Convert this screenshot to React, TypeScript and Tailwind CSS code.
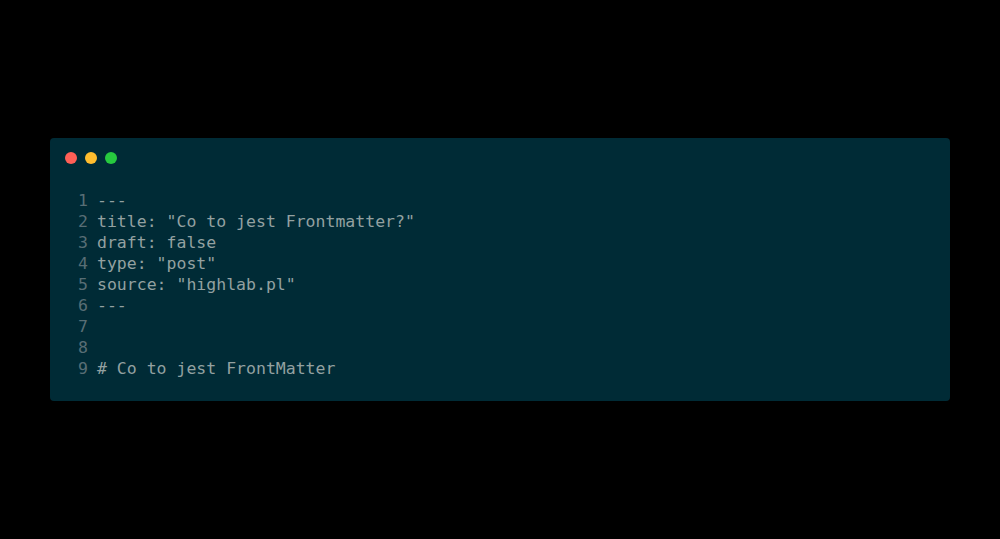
const lines = [
  "---",
  'title: "Co to jest Frontmatter?"',
  "draft: false",
  'type: "post"',
  'source: "highlab.pl"',
  "---",
  "",
  "",
  "# Co to jest FrontMatter",
];

export default function App() {
  return (
    <div className="w-[1000px] h-[539px] bg-black flex flex-col items-center pt-[138px]">
      <div className="w-[900px] h-[263px] bg-[#002b36] rounded-[4px] flex flex-col">
        <div className="flex items-center gap-2 pl-[15px] pt-[14px]">
          <span className="w-3 h-3 rounded-full bg-[#ff5f56]" />
          <span className="w-3 h-3 rounded-full bg-[#ffbd2e]" />
          <span className="w-3 h-3 rounded-full bg-[#27c93f]" />
        </div>
        <pre className="mt-[26px] pl-[28px] font-['DejaVu_Sans_Mono',monospace] text-[16.5px] leading-[21px] text-[#93a1a1]">
          {lines.map((line, i) => (
            <div key={i} className="flex">
              <span className="w-[19px] text-[#586e75]">{i + 1}</span>
              <span>{line}</span>
            </div>
          ))}
        </pre>
      </div>
    </div>
  );
}
